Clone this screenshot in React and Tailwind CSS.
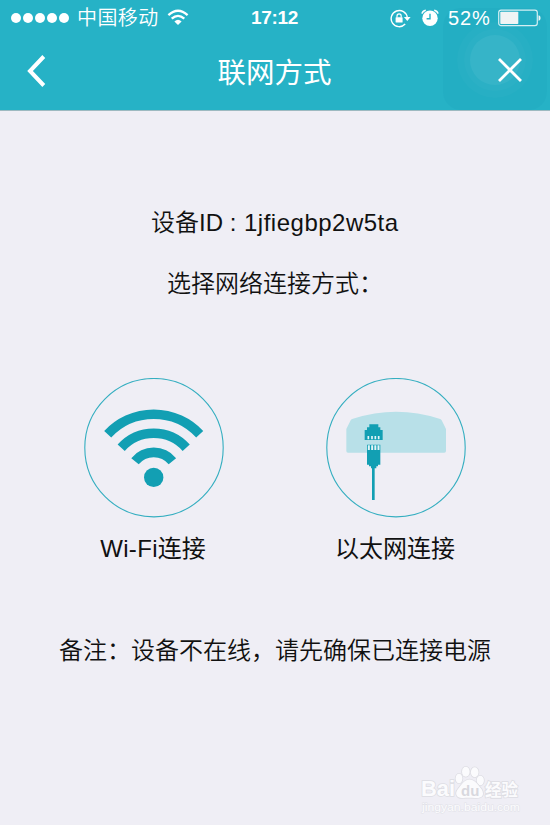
const SANS = "font-['Liberation_Sans','Noto_Sans_CJK_SC',sans-serif]"

function SignalDots() {
  return (
    <div className="flex gap-[2px]">
      {[0, 1, 2, 3, 4].map(i => (
        <span key={i} className="w-[10px] h-[10px] rounded-full bg-white" />
      ))}
    </div>
  )
}

function StatusWifi() {
  return (
    <svg width="22" height="17" viewBox="0 0 22 17" fill="none" stroke="white" strokeWidth="2.3">
      <path d="M1.4 6.1 Q11 -2.6 20.6 6.1" />
      <path d="M4.7 9.7 Q11 4 17.3 9.7" />
      <path d="M11 16 L7.4 12.4 Q11 9.2 14.6 12.4 Z" fill="white" stroke="none" />
    </svg>
  )
}

function RotationLock() {
  return (
    <svg width="21" height="19" viewBox="0 0 21 19" fill="none" stroke="white">
      <path d="M15.2 15.1 A8.1 8.1 0 1 1 17.3 8.6" strokeWidth="1.4" />
      <path d="M13.9 7.9 H20.6 L17.3 12 Z" fill="white" stroke="none" />
      <rect x="5.6" y="8.2" width="7" height="5.3" rx="0.6" fill="white" stroke="none" />
      <path d="M7 8.5 V6.9 A2.1 2.1 0 0 1 11.2 6.9 V8.5" strokeWidth="1.2" />
    </svg>
  )
}

function AlarmIcon() {
  return (
    <svg width="18" height="18" viewBox="0 0 18 18" fill="none">
      <circle cx="9" cy="9.3" r="7.7" fill="white" />
      <path d="M9 4.8 V9.7 H5.6" stroke="#26b2c6" strokeWidth="1.4" />
      <path d="M1 4.6 Q1.6 1.7 4.8 1.2 M17 4.6 Q16.4 1.7 13.2 1.2" stroke="white" strokeWidth="1.5" />
    </svg>
  )
}

function Battery() {
  return (
    <svg width="43" height="18" viewBox="0 0 43 18" fill="none">
      <rect x="0.7" y="1.2" width="38.6" height="15.4" rx="2.4" stroke="white" strokeOpacity="0.8" strokeWidth="1.2" />
      <rect x="2.3" y="2.8" width="18" height="12.2" rx="0.8" fill="#f0f4f4" />
      <path d="M40.5 6.2 Q42.6 6.4 42.6 9 Q42.6 11.6 40.5 11.8 Z" fill="white" fillOpacity="0.9" />
    </svg>
  )
}

function StatusBar() {
  return (
    <div className="relative h-9 flex items-center text-white">
      <div className="w-[251px] pl-[11px] flex items-center">
        <SignalDots />
        <span className="ml-2 text-[20px] leading-9 tracking-[0.4px] font-[350]">中国移动</span>
        <span className="ml-[8px] -mt-px"><StatusWifi /></span>
      </div>
      <span className="w-[139px] text-[19px] leading-9 font-bold tracking-[-0.3px]">17:12</span>
      <RotationLock />
      <span className="ml-[10px]"><AlarmIcon /></span>
      <span className="ml-[9px] w-[50px] text-[20px] leading-9 tracking-[0.9px]">52%</span>
      <Battery />
    </div>
  )
}

function NavBar() {
  return (
    <div className="relative h-[74px] pl-[27px] pr-[27px] flex items-center justify-between text-white">
      <svg width="19" height="32" viewBox="0 0 19 32" fill="none" stroke="white" strokeWidth="4" className="-mt-1">
        <path d="M16.8 1.5 L3 16 L16.8 30.5" />
      </svg>
      <h1 className="text-[28.5px] leading-10 ml-[6px]">联网方式</h1>
      <svg width="26" height="26" viewBox="0 0 26 26" fill="none" stroke="white" strokeWidth="2.8" className="-mt-[6px]">
        <path d="M2 2 L24 24 M24 2 L2 24" />
      </svg>
    </div>
  )
}

// translucent floating button in the top right corner
function AssistiveTouch() {
  return (
    <div className="absolute left-[443px] top-[8px] w-[104px] h-[102px] pt-[2px] rounded-[18px] bg-[#0078a0]/8 flex items-center justify-center pointer-events-none">
      <div className="w-[76px] h-[76px] rounded-full bg-white/2 flex items-center justify-center">
        <div className="w-[62px] h-[62px] rounded-full bg-white/2 flex items-center justify-center">
          <div className="w-[50px] h-[50px] rounded-full bg-white/5" />
        </div>
      </div>
    </div>
  )
}

function WifiDrawing() {
  return (
    <svg width="140" height="140" viewBox="0 0 140 140" fill="none" stroke="#129fb3">
      <circle cx="70" cy="69.7" r="69.2" strokeWidth="1.1" stroke="#34aec0" />
      <path d="M23.7 56.2 A62.9 62.9 0 0 1 115.7 56.2" strokeWidth="9.6" />
      <path d="M37.2 69.8 A43.7 43.7 0 0 1 102.2 69.8" strokeWidth="9.6" />
      <path d="M51 83.2 A24.2 24.2 0 0 1 88.4 83.2" strokeWidth="9.6" />
      <circle cx="69.7" cy="99.4" r="9.7" fill="#129fb3" stroke="none" />
    </svg>
  )
}

function EthernetDrawing() {
  return (
    <svg width="140" height="140" viewBox="0 0 140 140" fill="none">
      <circle cx="70" cy="69.7" r="69.2" strokeWidth="1.1" stroke="#34aec0" />
      <g transform="translate(-9 -8) scale(0.33333)">
        <path d="M93 248 Q88 248 88 243 V177 L101 151 Q103 147 108 146 Q238 104 367 146 Q372 147 374 151 L387 177 V243 Q387 248 382 248 Z" fill="#b8e0e8" />
        <path d="M143 210 V180 H150 V172 H157 V163 H184 V172 H190 V180 H197 V210 Z" fill="#129fb3" />
        <path d="M154 198 V208 M165 198 V208 M175 198 V208 M185 198 V208" stroke="#e4f5f8" strokeWidth="5" />
        <path d="M150 224 H190 V284 H183 V289 H178 V295 H173 V390 H165 V295 H162 V289 H156 V284 H150 Z" fill="#129fb3" />
        <path d="M155.5 226 V240 M165.5 226 V240 M175 226 V240 M184.5 226 V240" stroke="#e4f5f8" strokeWidth="6" />
      </g>
    </svg>
  )
}

function Watermark() {
  return (
    <svg width="120" height="64" viewBox="0 0 120 64" fill="#fbfbfd" stroke="#dddde3" strokeWidth="1.6" paintOrder="stroke" className={SANS}>
      <text x="9" y="35" fontSize="22" fontWeight="bold" textLength="34" lengthAdjust="spacingAndGlyphs">Bai</text>
      <ellipse cx="47" cy="17.5" rx="3.4" ry="4.8" />
      <ellipse cx="53.8" cy="10.8" rx="3.8" ry="5" />
      <ellipse cx="62.7" cy="11.3" rx="3.8" ry="5" />
      <ellipse cx="68.3" cy="19.5" rx="3.6" ry="4.8" />
      <path d="M57.5 18.5 C63 18.5 66 24 69.5 28 C73.5 35 69 37.5 63 37 C59 36.5 55 36.5 51 37 C45 37.5 42 33 46 28 C49.5 24 52 18.5 57.5 18.5 Z" />
      <text x="49" y="35" fontSize="15" fontWeight="bold" fill="#d8d8de" stroke="none">du</text>
      <text x="73" y="35" fontSize="16.5" fontWeight="bold" textLength="33">经验</text>
      <text x="10" y="50" fontSize="11.5" fill="#fcfcfe" stroke="#e2e2e8" strokeWidth="1" textLength="98" lengthAdjust="spacingAndGlyphs">jingyan.baidu.com</text>
    </svg>
  )
}

function Option({ label, children }) {
  return (
    <div className="w-[140px] flex flex-col items-center">
      {children}
      <span className="mt-[13px] mr-[2px] text-[24px] leading-9 whitespace-nowrap">{label}</span>
    </div>
  )
}

export default function App() {
  return (
    <div className={`relative w-[550px] h-[825px] overflow-hidden bg-[#efeef5] text-[#111] ${SANS}`}>
      <header className="relative h-[111px] bg-[#26b2c6] border-b border-[#9db9c0]">
        <AssistiveTouch />
        <StatusBar />
        <NavBar />
      </header>

      <main className="flex flex-col">
        <p className="mt-[94px] ml-[151px] flex text-[24px] leading-9">
          <span className="w-[81px] whitespace-pre font-[350]">设备ID :</span>
          <span className="ml-[12px] tracking-[0.5px]">1jfiegbp2w5ta</span>
        </p>
        <p className="mt-[25px] ml-[167px] text-[24px] leading-9 font-[350]">选择网络连接方式：</p>

        <div className="mt-[76px] ml-[84px] flex gap-[102px]">
          <Option label={<><span className="tracking-[0.35px]">Wi-Fi</span>连接</>}>
            <WifiDrawing />
          </Option>
          <Option label="以太网连接">
            <EthernetDrawing />
          </Option>
        </div>

        <p className="mt-[66px] ml-[59px] text-[24px] leading-9 font-[350]">备注：设备不在线，请先确保已连接电源</p>
      </main>

      <div className="absolute left-[412px] top-[761px]">
        <Watermark />
      </div>
    </div>
  )
}
